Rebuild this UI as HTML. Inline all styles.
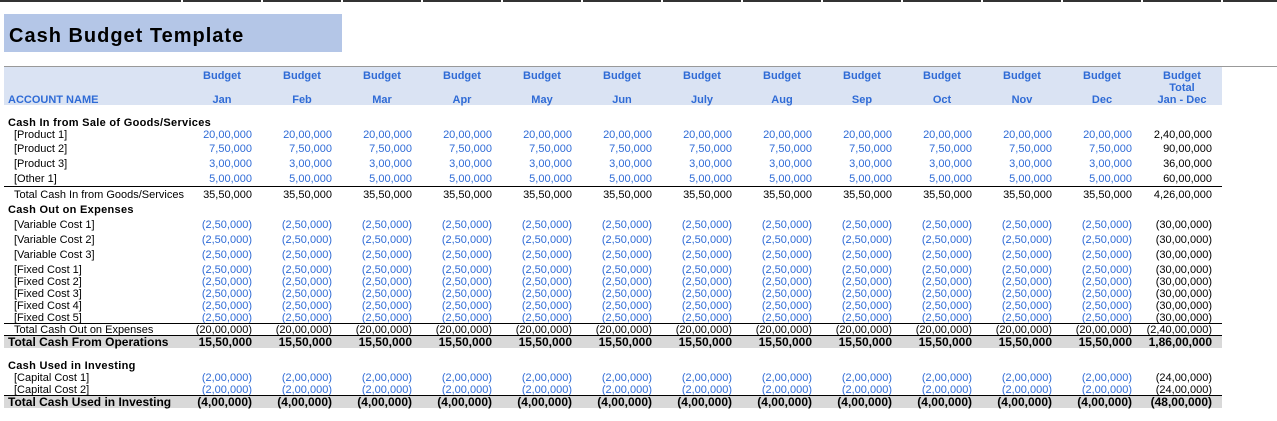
<!DOCTYPE html>
<html><head><meta charset="utf-8"><style>
body{margin:0;width:1277px;height:420px;background:#fff;font-family:"Liberation Sans",sans-serif;position:relative;overflow:hidden;color:#000}
.topbar{position:absolute;left:0;top:0;width:1277px;height:2px;background:#333}
.gap{position:absolute;top:0;width:2px;height:3px;background:#fff}
.title{position:absolute;left:4px;top:14px;width:338px;height:38px;background:#b4c6e7;font-weight:bold;font-size:20px;letter-spacing:1px;line-height:44px;padding-left:5px;box-sizing:border-box}
.gline{position:absolute;left:4px;top:66px;width:1273px;height:1px;background:#999}
.hband{position:absolute;left:4px;top:67px;width:1218px;height:38px;background:#dae3f3}
.wrap{position:absolute;left:0;top:1px;width:1277px;height:420px}
.r{position:absolute;left:4px;width:1218px;display:flex;font-size:11px;white-space:nowrap}
.r .l{width:178px;padding-left:4px;box-sizing:border-box}
.r .i{padding-left:10px}
.r .c{width:80px;text-align:right;padding-right:10px;box-sizing:border-box}
.b{color:#2f6bd6}
.h{color:#2f6bd6;font-weight:bold}
.h .c{text-align:center;padding-right:0;padding-left:0}
.bold{font-weight:bold;font-size:12px}
.sec{font-weight:bold;font-size:11px;letter-spacing:0.3px}
.bt{border-top:1px solid #000}
.gray{background:#d9d9d9}
</style></head><body>
<div class="topbar"></div>
<div class="gap" style="left:181px"></div><div class="gap" style="left:261px"></div><div class="gap" style="left:341px"></div><div class="gap" style="left:421px"></div><div class="gap" style="left:501px"></div><div class="gap" style="left:581px"></div><div class="gap" style="left:661px"></div><div class="gap" style="left:741px"></div><div class="gap" style="left:821px"></div><div class="gap" style="left:901px"></div><div class="gap" style="left:981px"></div><div class="gap" style="left:1061px"></div><div class="gap" style="left:1141px"></div><div class="gap" style="left:1221px"></div>
<div class="title">Cash Budget Template</div>
<div class="gline"></div>
<div class="hband"></div>
<div class="wrap">
<div class="r h" style="top:67px;height:16px;line-height:16px"><div class="l"></div><div class="c">Budget</div><div class="c">Budget</div><div class="c">Budget</div><div class="c">Budget</div><div class="c">Budget</div><div class="c">Budget</div><div class="c">Budget</div><div class="c">Budget</div><div class="c">Budget</div><div class="c">Budget</div><div class="c">Budget</div><div class="c">Budget</div><div class="c">Budget</div></div>
<div class="r h" style="top:80px;height:14px;line-height:14px"><div class="l"></div><div class="c"></div><div class="c"></div><div class="c"></div><div class="c"></div><div class="c"></div><div class="c"></div><div class="c"></div><div class="c"></div><div class="c"></div><div class="c"></div><div class="c"></div><div class="c"></div><div class="c">Total</div></div>
<div class="r h" style="top:91px;height:16px;line-height:16px"><div class="l">ACCOUNT NAME</div><div class="c">Jan</div><div class="c">Feb</div><div class="c">Mar</div><div class="c">Apr</div><div class="c">May</div><div class="c">Jun</div><div class="c">July</div><div class="c">Aug</div><div class="c">Sep</div><div class="c">Oct</div><div class="c">Nov</div><div class="c">Dec</div><div class="c">Jan - Dec</div></div>

<div class="r" style="top:115px;height:14px;line-height:14px"><div class="l sec">Cash In from Sale of Goods/Services</div></div>
<div class="r" style="top:127px;height:14px;line-height:14px"><div class="l i">[Product 1]</div><div class="c b">20,00,000</div><div class="c b">20,00,000</div><div class="c b">20,00,000</div><div class="c b">20,00,000</div><div class="c b">20,00,000</div><div class="c b">20,00,000</div><div class="c b">20,00,000</div><div class="c b">20,00,000</div><div class="c b">20,00,000</div><div class="c b">20,00,000</div><div class="c b">20,00,000</div><div class="c b">20,00,000</div><div class="c">2,40,00,000</div></div>
<div class="r" style="top:141px;height:14px;line-height:14px"><div class="l i">[Product 2]</div><div class="c b">7,50,000</div><div class="c b">7,50,000</div><div class="c b">7,50,000</div><div class="c b">7,50,000</div><div class="c b">7,50,000</div><div class="c b">7,50,000</div><div class="c b">7,50,000</div><div class="c b">7,50,000</div><div class="c b">7,50,000</div><div class="c b">7,50,000</div><div class="c b">7,50,000</div><div class="c b">7,50,000</div><div class="c">90,00,000</div></div>
<div class="r" style="top:156px;height:14px;line-height:14px"><div class="l i">[Product 3]</div><div class="c b">3,00,000</div><div class="c b">3,00,000</div><div class="c b">3,00,000</div><div class="c b">3,00,000</div><div class="c b">3,00,000</div><div class="c b">3,00,000</div><div class="c b">3,00,000</div><div class="c b">3,00,000</div><div class="c b">3,00,000</div><div class="c b">3,00,000</div><div class="c b">3,00,000</div><div class="c b">3,00,000</div><div class="c">36,00,000</div></div>
<div class="r" style="top:171px;height:14px;line-height:14px"><div class="l i">[Other 1]</div><div class="c b">5,00,000</div><div class="c b">5,00,000</div><div class="c b">5,00,000</div><div class="c b">5,00,000</div><div class="c b">5,00,000</div><div class="c b">5,00,000</div><div class="c b">5,00,000</div><div class="c b">5,00,000</div><div class="c b">5,00,000</div><div class="c b">5,00,000</div><div class="c b">5,00,000</div><div class="c b">5,00,000</div><div class="c">60,00,000</div></div>
<div class="r bt" style="top:185px;height:15px;line-height:16px"><div class="l i">Total Cash In from Goods/Services</div><div class="c">35,50,000</div><div class="c">35,50,000</div><div class="c">35,50,000</div><div class="c">35,50,000</div><div class="c">35,50,000</div><div class="c">35,50,000</div><div class="c">35,50,000</div><div class="c">35,50,000</div><div class="c">35,50,000</div><div class="c">35,50,000</div><div class="c">35,50,000</div><div class="c">35,50,000</div><div class="c">4,26,00,000</div></div>
<div class="r" style="top:202px;height:14px;line-height:14px"><div class="l sec">Cash Out on Expenses</div></div>

<div class="r" style="top:217px;height:14px;line-height:14px"><div class="l i">[Variable Cost 1]</div><div class="c b">(2,50,000)</div><div class="c b">(2,50,000)</div><div class="c b">(2,50,000)</div><div class="c b">(2,50,000)</div><div class="c b">(2,50,000)</div><div class="c b">(2,50,000)</div><div class="c b">(2,50,000)</div><div class="c b">(2,50,000)</div><div class="c b">(2,50,000)</div><div class="c b">(2,50,000)</div><div class="c b">(2,50,000)</div><div class="c b">(2,50,000)</div><div class="c">(30,00,000)</div></div>
<div class="r" style="top:232px;height:14px;line-height:14px"><div class="l i">[Variable Cost 2]</div><div class="c b">(2,50,000)</div><div class="c b">(2,50,000)</div><div class="c b">(2,50,000)</div><div class="c b">(2,50,000)</div><div class="c b">(2,50,000)</div><div class="c b">(2,50,000)</div><div class="c b">(2,50,000)</div><div class="c b">(2,50,000)</div><div class="c b">(2,50,000)</div><div class="c b">(2,50,000)</div><div class="c b">(2,50,000)</div><div class="c b">(2,50,000)</div><div class="c">(30,00,000)</div></div>
<div class="r" style="top:247px;height:14px;line-height:14px"><div class="l i">[Variable Cost 3]</div><div class="c b">(2,50,000)</div><div class="c b">(2,50,000)</div><div class="c b">(2,50,000)</div><div class="c b">(2,50,000)</div><div class="c b">(2,50,000)</div><div class="c b">(2,50,000)</div><div class="c b">(2,50,000)</div><div class="c b">(2,50,000)</div><div class="c b">(2,50,000)</div><div class="c b">(2,50,000)</div><div class="c b">(2,50,000)</div><div class="c b">(2,50,000)</div><div class="c">(30,00,000)</div></div>
<div class="r" style="top:263px;height:12px;line-height:12px"><div class="l i">[Fixed Cost 1]</div><div class="c b">(2,50,000)</div><div class="c b">(2,50,000)</div><div class="c b">(2,50,000)</div><div class="c b">(2,50,000)</div><div class="c b">(2,50,000)</div><div class="c b">(2,50,000)</div><div class="c b">(2,50,000)</div><div class="c b">(2,50,000)</div><div class="c b">(2,50,000)</div><div class="c b">(2,50,000)</div><div class="c b">(2,50,000)</div><div class="c b">(2,50,000)</div><div class="c">(30,00,000)</div></div>
<div class="r" style="top:275px;height:12px;line-height:12px"><div class="l i">[Fixed Cost 2]</div><div class="c b">(2,50,000)</div><div class="c b">(2,50,000)</div><div class="c b">(2,50,000)</div><div class="c b">(2,50,000)</div><div class="c b">(2,50,000)</div><div class="c b">(2,50,000)</div><div class="c b">(2,50,000)</div><div class="c b">(2,50,000)</div><div class="c b">(2,50,000)</div><div class="c b">(2,50,000)</div><div class="c b">(2,50,000)</div><div class="c b">(2,50,000)</div><div class="c">(30,00,000)</div></div>
<div class="r" style="top:287px;height:12px;line-height:12px"><div class="l i">[Fixed Cost 3]</div><div class="c b">(2,50,000)</div><div class="c b">(2,50,000)</div><div class="c b">(2,50,000)</div><div class="c b">(2,50,000)</div><div class="c b">(2,50,000)</div><div class="c b">(2,50,000)</div><div class="c b">(2,50,000)</div><div class="c b">(2,50,000)</div><div class="c b">(2,50,000)</div><div class="c b">(2,50,000)</div><div class="c b">(2,50,000)</div><div class="c b">(2,50,000)</div><div class="c">(30,00,000)</div></div>
<div class="r" style="top:299px;height:12px;line-height:12px"><div class="l i">[Fixed Cost 4]</div><div class="c b">(2,50,000)</div><div class="c b">(2,50,000)</div><div class="c b">(2,50,000)</div><div class="c b">(2,50,000)</div><div class="c b">(2,50,000)</div><div class="c b">(2,50,000)</div><div class="c b">(2,50,000)</div><div class="c b">(2,50,000)</div><div class="c b">(2,50,000)</div><div class="c b">(2,50,000)</div><div class="c b">(2,50,000)</div><div class="c b">(2,50,000)</div><div class="c">(30,00,000)</div></div>
<div class="r" style="top:311px;height:12px;line-height:12px"><div class="l i">[Fixed Cost 5]</div><div class="c b">(2,50,000)</div><div class="c b">(2,50,000)</div><div class="c b">(2,50,000)</div><div class="c b">(2,50,000)</div><div class="c b">(2,50,000)</div><div class="c b">(2,50,000)</div><div class="c b">(2,50,000)</div><div class="c b">(2,50,000)</div><div class="c b">(2,50,000)</div><div class="c b">(2,50,000)</div><div class="c b">(2,50,000)</div><div class="c b">(2,50,000)</div><div class="c">(30,00,000)</div></div>
<div class="r bt" style="top:322px;height:11px;line-height:12px"><div class="l i">Total Cash Out on Expenses</div><div class="c">(20,00,000)</div><div class="c">(20,00,000)</div><div class="c">(20,00,000)</div><div class="c">(20,00,000)</div><div class="c">(20,00,000)</div><div class="c">(20,00,000)</div><div class="c">(20,00,000)</div><div class="c">(20,00,000)</div><div class="c">(20,00,000)</div><div class="c">(20,00,000)</div><div class="c">(20,00,000)</div><div class="c">(20,00,000)</div><div class="c">(2,40,00,000)</div></div>
<div class="r bt gray bold" style="top:334px;height:12px;line-height:12px"><div class="l">Total Cash From Operations</div><div class="c">15,50,000</div><div class="c">15,50,000</div><div class="c">15,50,000</div><div class="c">15,50,000</div><div class="c">15,50,000</div><div class="c">15,50,000</div><div class="c">15,50,000</div><div class="c">15,50,000</div><div class="c">15,50,000</div><div class="c">15,50,000</div><div class="c">15,50,000</div><div class="c">15,50,000</div><div class="c">1,86,00,000</div></div>

<div class="r" style="top:358px;height:14px;line-height:14px"><div class="l sec">Cash Used in Investing</div></div>
<div class="r" style="top:371px;height:12px;line-height:12px"><div class="l i">[Capital Cost 1]</div><div class="c b">(2,00,000)</div><div class="c b">(2,00,000)</div><div class="c b">(2,00,000)</div><div class="c b">(2,00,000)</div><div class="c b">(2,00,000)</div><div class="c b">(2,00,000)</div><div class="c b">(2,00,000)</div><div class="c b">(2,00,000)</div><div class="c b">(2,00,000)</div><div class="c b">(2,00,000)</div><div class="c b">(2,00,000)</div><div class="c b">(2,00,000)</div><div class="c">(24,00,000)</div></div>
<div class="r" style="top:383px;height:12px;line-height:12px"><div class="l i">[Capital Cost 2]</div><div class="c b">(2,00,000)</div><div class="c b">(2,00,000)</div><div class="c b">(2,00,000)</div><div class="c b">(2,00,000)</div><div class="c b">(2,00,000)</div><div class="c b">(2,00,000)</div><div class="c b">(2,00,000)</div><div class="c b">(2,00,000)</div><div class="c b">(2,00,000)</div><div class="c b">(2,00,000)</div><div class="c b">(2,00,000)</div><div class="c b">(2,00,000)</div><div class="c">(24,00,000)</div></div>
<div class="r bt gray bold" style="top:394px;height:12px;line-height:12px"><div class="l">Total Cash Used in Investing</div><div class="c">(4,00,000)</div><div class="c">(4,00,000)</div><div class="c">(4,00,000)</div><div class="c">(4,00,000)</div><div class="c">(4,00,000)</div><div class="c">(4,00,000)</div><div class="c">(4,00,000)</div><div class="c">(4,00,000)</div><div class="c">(4,00,000)</div><div class="c">(4,00,000)</div><div class="c">(4,00,000)</div><div class="c">(4,00,000)</div><div class="c">(48,00,000)</div></div>
</div>
</body></html>
